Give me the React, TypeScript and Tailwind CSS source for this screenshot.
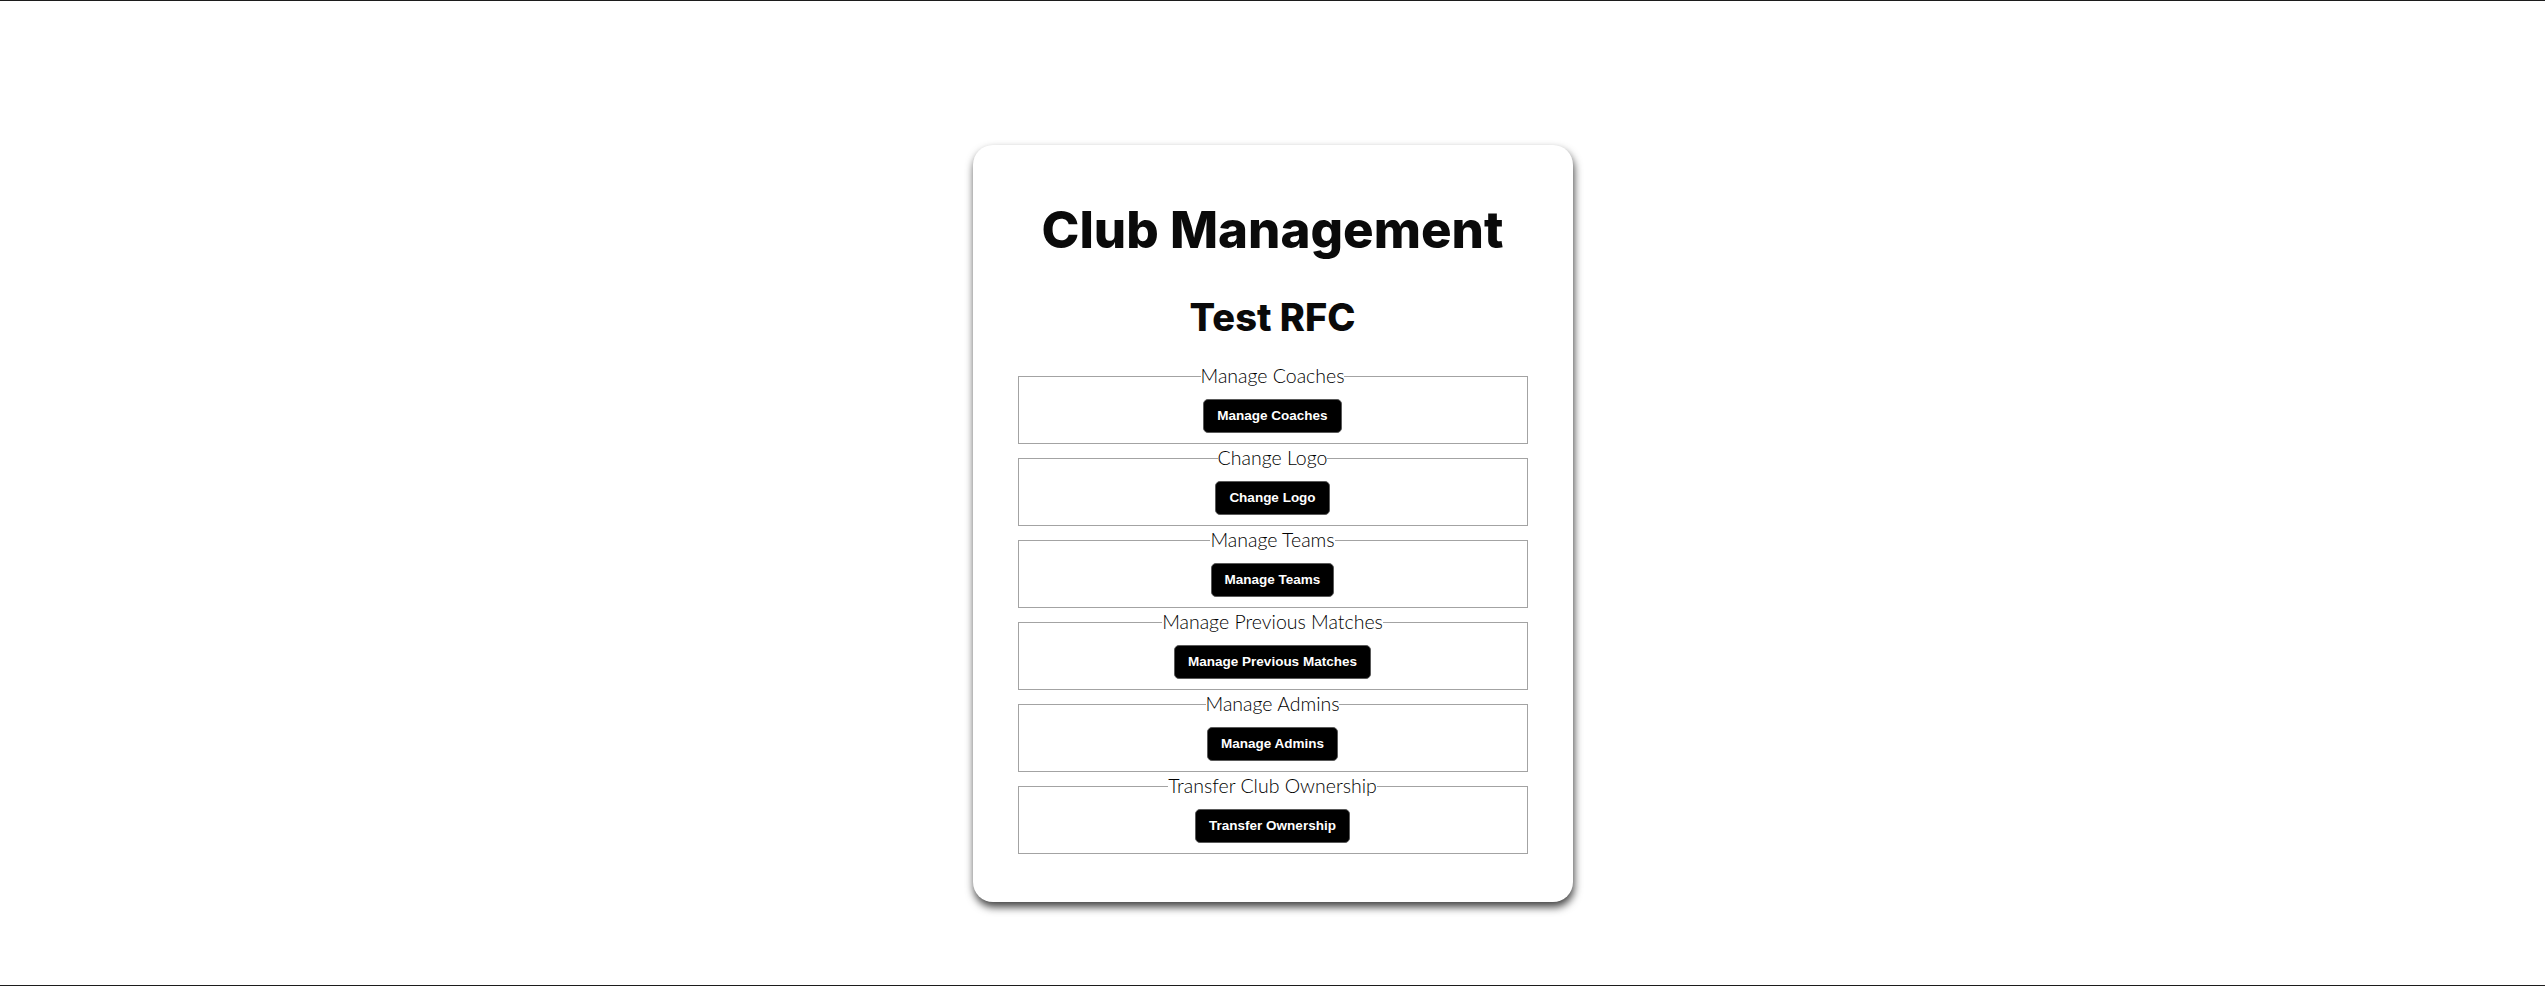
const sections = [
  { legend: 'Manage Coaches', button: 'Manage Coaches' },
  { legend: 'Change Logo', button: 'Change Logo' },
  { legend: 'Manage Teams', button: 'Manage Teams' },
  { legend: 'Manage Previous Matches', button: 'Manage Previous Matches' },
  { legend: 'Manage Admins', button: 'Manage Admins' },
  { legend: 'Transfer Club Ownership', button: 'Transfer Ownership' },
];

function Section({ legend, button }: { legend: string; button: string }) {
  return (
    <fieldset className="border border-[#a3a3a3] px-[10px] pt-[9px] pb-[10px] text-center">
      <legend className="mx-auto px-0 text-[19.5px] leading-[28px] font-light text-black font-['Lato','Open_Sans',sans-serif]">
        {legend}
      </legend>
      <button
        type="button"
        className="rounded-[5px] border border-[#5a5a5a] bg-black px-[13px] py-[8px] text-[13.5px] leading-[16px] font-bold text-white font-['Liberation_Sans',Arial,sans-serif]"
      >
        {button}
      </button>
    </fieldset>
  );
}

export default function App() {
  return (
    <div className="h-[986px] border-y border-[#1c1c1c] bg-white">
      <div className="mx-auto mt-[144px] w-[600px] rounded-[20px] bg-white px-[45px] pt-[56px] pb-[48px] shadow-[1px_5px_8px_rgba(0,0,0,0.75)]">
        <h1 className="text-center text-[51px] leading-[58px] font-extrabold text-[#0a0a0a] font-['Inter','Open_Sans',sans-serif]">
          Club Management
        </h1>
        <h2 className="mt-[38px] text-center text-[38px] leading-[40px] font-extrabold text-[#0a0a0a] font-['Inter','Open_Sans',sans-serif]">
          Test RFC
        </h2>
        <div className="mt-[25px] flex flex-col">
          {sections.map((s) => (
            <Section key={s.legend} legend={s.legend} button={s.button} />
          ))}
        </div>
      </div>
    </div>
  );
}
